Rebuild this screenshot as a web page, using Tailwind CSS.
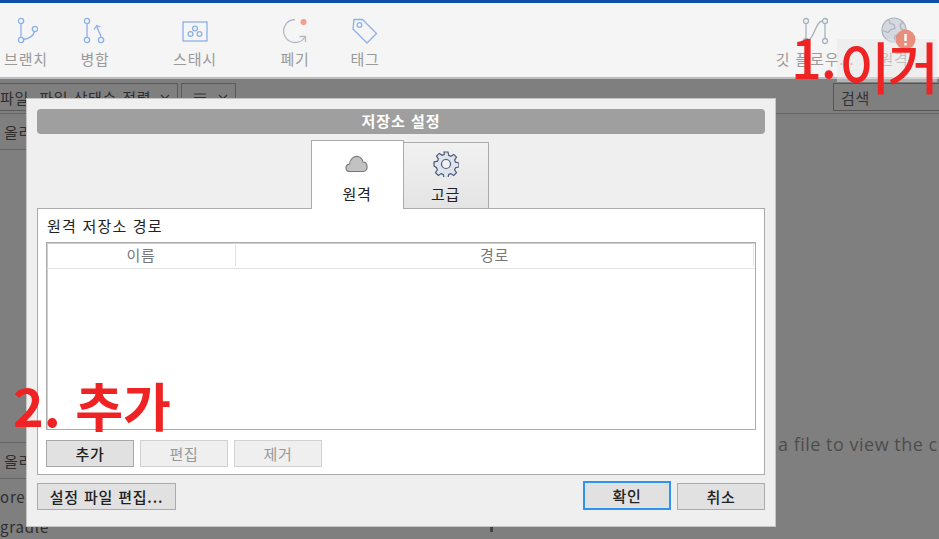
<!DOCTYPE html>
<html lang="ko">
  <head>
    <meta charset="UTF-8" />
    <title>저장소 설정</title>
    <script src="https://cdn.jsdelivr.net/npm/@tailwindcss/browser@4"></script>
  </head>
  <body class="relative h-[539px] w-[939px] overflow-hidden bg-[#7f7f7f] font-['Noto_Sans_CJK_KR','Liberation_Sans',sans-serif] text-[15px] leading-none tracking-[0.8px]">
    <div class="h-[3px] bg-[#0f4ea8]"></div>

    <!-- toolbar -->
    <header class="flex h-[76px] border-b-2 border-[#bdbdbd] bg-[#f5f5f5] text-[#9a9a9a]">
      <div class="flex w-[52px] flex-col items-center pt-[13px]">
        <svg width="24" height="28" viewBox="0 0 24 28" fill="none" stroke="#8cb0e8" stroke-width="1.3">
          <circle cx="7" cy="5" r="2.6" /><circle cx="7" cy="24" r="2.6" /><circle cx="21" cy="13" r="2.6" />
          <path d="M7 8v13M9.500 23.500c6-1 10-3.500 11-8" />
        </svg>
        <span class="mt-[7px] whitespace-nowrap">브랜치</span>
      </div>
      <div class="ml-[17px] flex w-[52px] flex-col items-center pt-[13px]">
        <svg width="24" height="28" viewBox="0 0 24 28" fill="none" stroke="#8cb0e8" stroke-width="1.3">
          <circle cx="4" cy="5" r="2.600" /><circle cx="4" cy="24" r="2.600" /><circle cx="18" cy="24" r="2.600" />
          <path d="M4 8v13M18 21.500c0-4-3-6-4-11M11 13.500l2.800-4 3.700 1.500" />
        </svg>
        <span class="mt-[7px] whitespace-nowrap">병합</span>
      </div>
      <div class="ml-[48px] flex w-[52px] flex-col items-center pt-[17px]">
        <svg width="26" height="24" viewBox="0 0 26 24" fill="none" stroke="#8cb0e8" stroke-width="1.300">
          <rect x="1" y="2" width="24" height="19" /><circle cx="13" cy="8.500" r="2.400" /><circle cx="8.500" cy="14" r="2.400" /><circle cx="17.500" cy="14" r="2.400" />
        </svg>
        <span class="mt-[7px] whitespace-nowrap">스태시</span>
      </div>
      <div class="ml-[48px] flex w-[52px] flex-col items-center pt-[14px]">
        <svg width="26" height="27" viewBox="0 0 26 27" fill="none" stroke="#b4bac4" stroke-width="1.300">
          <path d="M13 2.500a11.500 11.500 0 1 0 10 17.500M23.500 25v-5.500h-6" />
          <circle cx="21.500" cy="5" r="3" fill="#f99b8a" stroke="none" />
        </svg>
        <span class="mt-[7px] whitespace-nowrap">폐기</span>
      </div>
      <div class="ml-[18px] flex w-[52px] flex-col items-center pt-[14px]">
        <svg width="28" height="27" viewBox="0 0 28 27" fill="none" stroke="#8cb0e8" stroke-width="1.300">
          <path d="M3 2.500h8.500l14 14-9.500 9.500-14-14z" /><circle cx="8.500" cy="8" r="2.300" />
        </svg>
        <span class="mt-[7px] whitespace-nowrap">태그</span>
      </div>
      <div class="ml-auto flex w-[78px] flex-col items-center pt-[14px]">
        <svg width="30" height="28" viewBox="0 0 30 28" fill="none" stroke="#a9b1bd" stroke-width="1.300">
          <circle cx="6" cy="4" r="2.500" /><circle cx="25" cy="4" r="2.500" /><circle cx="6" cy="24" r="2.500" /><circle cx="25" cy="24" r="2.500" />
          <path d="M6 6.500v15M25 6.500v15M22.500 4c-7 0-8 17-14 19" />
        </svg>
        <span class="mt-[6px] whitespace-nowrap">깃 플로우...</span>
      </div>
      <div class="ml-[2px] mr-[7px] flex w-[76px] flex-col items-center pt-[14px]">
        <svg width="26" height="28" viewBox="0 0 26 28" fill="none" stroke="#aab2bd" stroke-width="1.200">
          <circle cx="13" cy="13" r="12" fill="#d5d9df" />
          <path d="M8 2.500l1 4 4 1 1 4-4 1-3 3-5-2M22 5l-3 3 1 4 4 1M13 24l1-5 4-2 2 3" />
        </svg>
        <span class="mt-[6px] whitespace-nowrap">원격</span>
      </div>
    </header>

    <!-- dimmed window behind the dialog -->
    <main class="flex h-[460px] text-[#2e2e2e]">
      <section class="flex w-[776px] flex-col">
        <div class="flex h-[35px] items-start border-b border-[#666] pt-[4px]">
          <div class="flex h-[28px] w-[178px] items-center justify-between border border-l-0 border-[#5a5a5a] pr-[7px]">
            <span class="whitespace-nowrap">파일 &nbsp;파일 상태순 정렬</span>
            <svg width="10" height="6" viewBox="0 0 10 6" fill="none" stroke="#333" stroke-width="1.200"><path d="M1 1l4 4 4-4" /></svg>
          </div>
          <div class="ml-[3px] flex h-[28px] w-[55px] items-center justify-between border border-[#5a5a5a] pl-[12px] pr-[7px]">
            <svg width="12" height="9" viewBox="0 0 12 9" stroke="#333" stroke-width="1.200"><path d="M0 1h12M0 4.500h12M0 8h12" /></svg>
            <svg width="10" height="6" viewBox="0 0 10 6" fill="none" stroke="#333" stroke-width="1.200"><path d="M1 1l4 4 4-4" /></svg>
          </div>
        </div>
        <div class="flex h-[36px] items-center border-b border-[#666] pl-[4px]">올리</div>
        <div class="flex-1"></div>
        <div class="flex h-[37px] items-center border-y border-[#666] pl-[4px]">올리</div>
        <div class="flex h-[34px] items-center">ore</div>
        <div class="flex h-[26px] items-center justify-between pr-[283px]">
          <span>gradle</span><span class="h-[12px] w-[3px] bg-[#444]"></span>
        </div>
      </section>
      <section class="flex flex-1 flex-col overflow-hidden">
        <div class="flex h-[35px] justify-end border-b border-[#666] pt-[4px]">
          <div class="flex h-[28px] w-[106px] items-center border border-r-0 border-[#555] pl-[7px] text-[#333]">검색</div>
        </div>
        <p class="mt-[320px] whitespace-nowrap pl-[2px] font-['Open_Sans',sans-serif] text-[18px] leading-[20px] tracking-[0.5px] text-[#4d4d4d]">a file to view the c</p>
      </section>
    </main>

    <!-- repository settings dialog -->
    <div class="absolute left-[26px] top-[98px] flex h-[429px] w-[750px] flex-col border border-[#c4c4c4] bg-[#efefef] px-[10px] pt-[10px] text-[#222]">
      <div class="flex h-[25px] shrink-0 items-center justify-center rounded-[4px] bg-[#9f9f9f] pb-[3px] font-bold tracking-[1px] text-white">저장소 설정</div>

      <div class="flex h-[74px] shrink-0 items-end justify-center pr-[3px]">
        <div class="z-10 -mb-px flex h-[69px] w-[93px] flex-col items-center border border-b-0 border-[#ababab] bg-white pt-[14px]">
          <svg width="24" height="18" viewBox="0 0 24 18" fill="#c2c2c2" stroke="#777" stroke-width="1.100">
            <path d="M5 16.500c-5 0-5.500-6.500-.5-7.500C5 3.500 9.500.8 13 1.500c3 .6 4.500 3 5 5.500 5 0 6 9.500 0 9.500z" />
          </svg>
          <span class="mt-[13px]">원격</span>
        </div>
        <div class="flex h-[66px] w-[85px] flex-col items-center border border-b-0 border-l-0 border-[#ababab] bg-gradient-to-b from-[#f1f1f1] to-[#e4e4e4] pt-[8px]">
          <svg width="26" height="26" viewBox="0 0 26 26" fill="#dfe3ec" stroke="#4b5a78" stroke-width="1.200">
            <path d="M11 1h4l.7 3.400 2.100.9 2.900-1.900 2.800 2.800-1.900 2.900.9 2.100 3.500.8v4l-3.500.7-.9 2.100 1.900 2.900-2.800 2.800-2.900-1.900-2.100.9-.7 3.400h-4l-.7-3.400-2.100-.9-2.900 1.900-2.800-2.800 1.900-2.900-.9-2.100L1 15v-4l3.500-.8.900-2.100-1.900-2.900 2.800-2.800 2.900 1.900 2.100-.9z" />
            <circle cx="13" cy="13" r="4.500" fill="#f1f1f1" />
          </svg>
          <span class="mt-[9px]">고급</span>
        </div>
      </div>

      <div class="flex h-[267px] shrink-0 flex-col border border-[#ababab] bg-white px-[8px]">
        <div class="flex h-[33px] shrink-0 items-center pl-[1px] tracking-[1.200px]">원격 저장소 경로</div>
        <div class="flex-1 border border-[#ababab] shadow-[inset_1px_1px_0_#d0d0d0]">
          <div class="flex h-[26px] border-b border-[#e3e3e3] pb-[2px] text-[#777]">
            <div class="flex w-[189px] items-center justify-center border-r border-[#e3e3e3]">이름</div>
            <div class="flex w-[518px] items-center justify-center border-r border-[#e3e3e3]">경로</div>
          </div>
        </div>
        <div class="flex h-[44px] shrink-0 items-start gap-[6px] pt-[10px]">
          <button class="h-[27px] w-[88px] border border-[#a8a8a8] bg-[#e1e1e1] font-medium text-[#222]">추가</button>
          <button class="h-[27px] w-[88px] border border-[#d2d2d2] bg-[#efefef] text-[#999]">편집</button>
          <button class="h-[27px] w-[88px] border border-[#d2d2d2] bg-[#efefef] text-[#999]">제거</button>
        </div>
      </div>

      <div class="flex flex-1 items-start justify-between pt-[6px]">
        <button class="mt-[2px] h-[27px] w-[139px] border border-[#ababab] bg-[#e1e1e1] font-medium text-[#222]">설정 파일 편집...</button>
        <div class="flex gap-[6px]">
          <button class="h-[29px] w-[88px] border-2 border-[#2d95ee] bg-[#e1e1e1] font-medium text-[#222]">확인</button>
          <button class="mt-[2px] h-[27px] w-[88px] border border-[#ababab] bg-[#e1e1e1] font-medium text-[#222]">취소</button>
        </div>
      </div>
    </div>

    <!-- annotations drawn on the screenshot -->
    <div class="absolute left-[837px] top-[39px] h-[43px] w-[100px] bg-[#e8e8e8]/50"></div>
    <svg class="absolute left-[895px] top-[29px]" width="21" height="21" viewBox="0 0 21 21">
      <circle cx="10.500" cy="10.500" r="10" fill="#e88e7c" />
      <path d="M10.500 5v7M10.500 14v2.500" stroke="#fff" stroke-width="2.400" />
    </svg>
    <div class="absolute left-[791px] top-[22px] flex whitespace-nowrap text-[54px] font-medium leading-[68px] tracking-[-1px] text-[#ef2323]">
      <span>1.</span><span class="ml-[3px] mt-[9px] text-[56px] -tracking-[3px]">이거</span>
    </div>
    <div class="absolute left-[13px] top-[372px] whitespace-nowrap text-[52px] font-bold leading-[66px] tracking-normal text-[#ef2323]">2. 추가</div>
  </body>
</html>
